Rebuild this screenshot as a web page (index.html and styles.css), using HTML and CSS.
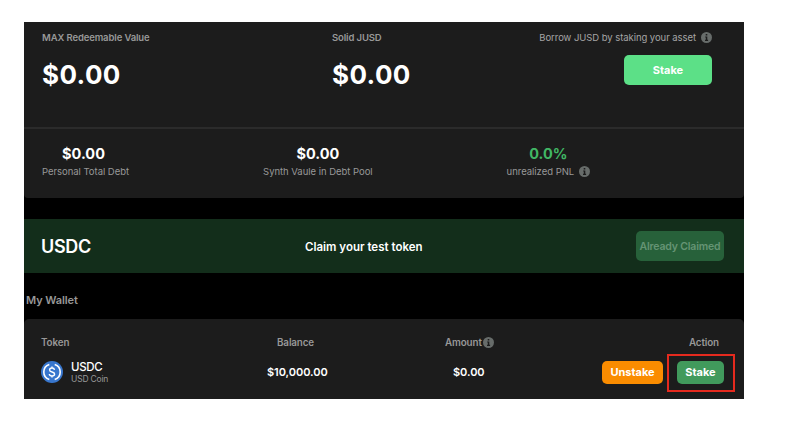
FILE: index.html
```html
<!DOCTYPE html>
<html lang="en">
<head>
<meta charset="utf-8">
<title>JUSD Wallet</title>
<link rel="stylesheet" href="styles.css">
</head>
<body>
<svg class="defs" aria-hidden="true">
  <symbol id="info" viewBox="0 0 11 11"><circle cx="5.5" cy="5.5" r="5.5" fill="#676c6a"/><path d="M4.7 2h1.600v1.400H4.700zM4.200 4.500h2.100v3.300h.8V9H4V7.800h.8V5.600h-.6z" fill="#1c1c1c"/></symbol>
</svg>
<main class="app">
  <section class="summary">
    <div class="summary-top">
      <div class="stat"><div class="label">MAX Redeemable Value</div><div class="big">$0.00</div></div>
      <div class="stat"><div class="label">Solid JUSD</div><div class="big">$0.00</div></div>
      <div class="borrow">
        <div class="borrow-label"><span>Borrow JUSD by staking your asset</span><svg class="info"><use href="#info"/></svg></div>
        <button class="btn btn-large">Stake</button>
      </div>
    </div>
    <div class="summary-bottom">
      <div class="debt personal"><strong class="mid">$0.00</strong><span class="note">Personal Total Debt</span></div>
      <div class="debt"><strong class="mid">$0.00</strong><span class="note">Synth Vaule in Debt Pool</span></div>
      <div class="debt"><strong class="mid green">0.0%</strong><span class="note"><span>unrealized PNL</span><svg class="info"><use href="#info"/></svg></span></div>
    </div>
  </section>
  <section class="claim">
    <h2 class="claim-token">USDC</h2>
    <div class="claim-text">Claim your test token</div>
    <button class="btn btn-claimed">Already Claimed</button>
  </section>
  <h3 class="wallet-title">My Wallet</h3>
  <section class="wallet">
    <div class="row head">
      <div>Token</div><div>Balance</div>
      <div class="amount-head"><span>Amount</span><svg class="info"><use href="#info"/></svg></div>
      <div>Action</div>
    </div>
    <div class="row body">
      <div class="coin">
        <svg class="coin-icon" viewBox="0 0 22 22"><circle cx="11" cy="11" r="11" fill="#3876cd"/><g fill="none" stroke="#fff" stroke-width="1.6"><path d="M8.300 3.400a8 8 0 0 0 0 15.200M13.700 3.400a8 8 0 0 1 0 15.200"/><path d="M13.500 8.800C13.300 7.500 12.300 7 11 7c-1.500 0-2.400.7-2.400 1.900 0 2.800 5 1.300 5 4.200 0 1.200-1 1.900-2.600 1.900-1.500 0-2.500-.6-2.700-2M11 5.400V7M11 15v1.600" stroke-width="1.4"/></g></svg>
        <div><div class="coin-symbol">USDC</div><div class="coin-name">USD Coin</div></div>
      </div>
      <div class="value">$10,000.00</div>
      <div class="value">$0.00</div>
      <div class="actions"><button class="btn btn-unstake">Unstake</button><div class="highlight"><button class="btn btn-stake">Stake</button></div></div>
    </div>
  </section>
</main>
</body>
</html>
```
FILE: styles.css
```css
* { box-sizing: border-box; }
body { margin: 0; padding: 22px 41px 27px 24px; background: #fff; font-family: Inter, "Liberation Sans", sans-serif; color: #fff; }
.defs { position: absolute; width: 0; height: 0; }
.app { width: 720px; height: 377px; background: #000; overflow: hidden; white-space: nowrap; }
h2, h3 { margin: 0; }
.info { width: 11px; height: 11px; flex: none; display: block; margin-top: -2px; }
.btn { display: flex; align-items: center; justify-content: center; border: 0; padding: 0; color: #fff; font: 700 11px/14px Inter, sans-serif; flex: none; }

.summary { height: 176px; background: #1c1c1c; border-radius: 0 0 4px 4px; }
.summary-top { height: 107px; display: grid; grid-template-columns: 290px 1fr auto; padding: 10px 32px 0 18px; border-bottom: 2px solid #2b2b2b; }
.label { font-size: 9.5px; line-height: 12px; font-weight: 600; letter-spacing: -.12px; color: #989898; }
.big { font-size: 26px; line-height: 32px; font-weight: 700; margin-top: 15px; letter-spacing: .4px; }
.borrow { display: flex; flex-direction: column; align-items: flex-end; }
.borrow-label { display: flex; align-items: center; gap: 5px; font-size: 9.5px; line-height: 12px; letter-spacing: -.06px; color: #a5a5a5; }
.btn-large { width: 88px; height: 30px; margin-top: 11px; border-radius: 5px; background: #5ce087; }
.summary-bottom { height: 69px; display: flex; gap: 134px; padding: 16px 0 0 18px; }
.debt { display: flex; flex-direction: column; align-items: center; }
.personal .mid { margin-right: 4px; }
.mid { font-size: 14.5px; line-height: 18px; }
.green { color: #41b765; }
.note { display: flex; align-items: center; gap: 5px; font-size: 9.5px; line-height: 12px; margin-top: 3px; color: #989898; letter-spacing: -.03px; }

.claim { height: 54px; margin-top: 21px; padding: 0 20px 0 17px; background: #132e1b; display: grid; grid-template-columns: 264px 1fr 88px; align-items: center; }
.claim-token { font-size: 18px; line-height: 22px; font-weight: 600; letter-spacing: -.3px; padding-top: 1px; }
.claim-text { font-size: 11.5px; line-height: 14px; font-weight: 600; padding-top: 1px; }
.btn-claimed { height: 30px; padding-top: 1px; border-radius: 5px; background: #27613a; color: #659474; font-weight: 600; font-size: 10.5px; letter-spacing: -.18px; }
.wallet-title { margin: 20px 0 0 2px; font-size: 11px; line-height: 14px; font-weight: 600; letter-spacing: -.08px; color: #989898; }

.wallet { height: 81px; margin-top: 12px; padding: 17px 0 0 17px; background: #1c1c1c; border-radius: 5px 5px 0 0; }
.row { display: grid; grid-template-columns: 236px 168px 1fr auto; align-items: center; }
.head { height: 14px; padding-right: 25px; font-size: 9.8px; line-height: 12px; font-weight: 600; letter-spacing: -.1px; color: #989898; }
.amount-head { display: flex; align-items: center; gap: 1px; }
.body { height: 38px; margin-top: 4px; padding-right: 9px; grid-template-columns: 226px 186px 1fr auto; }
.coin { display: flex; align-items: center; gap: 8px; margin-top: -2px; }
.coin-icon { width: 22px; height: 22px; }
.coin-symbol { font-size: 11.5px; line-height: 14px; font-weight: 500; letter-spacing: -.3px; }
.coin-name { font-size: 8.5px; line-height: 11px; letter-spacing: -.2px; color: #989898; }
.value { font-size: 11px; line-height: 14px; font-weight: 600; letter-spacing: -.05px; margin-top: -2px; }
.actions { display: flex; align-items: center; gap: 4px; }
.btn-unstake { width: 61px; height: 23px; margin-top: -2px; border-radius: 5px; background: #fa8c00; }
.highlight { width: 68px; height: 38px; border: 2px solid #e52a1e; display: flex; align-items: center; justify-content: center; }
.btn-stake { width: 47px; height: 23px; margin: -2px 1px 0 0; border-radius: 5px; background: #419a5c; }
```
